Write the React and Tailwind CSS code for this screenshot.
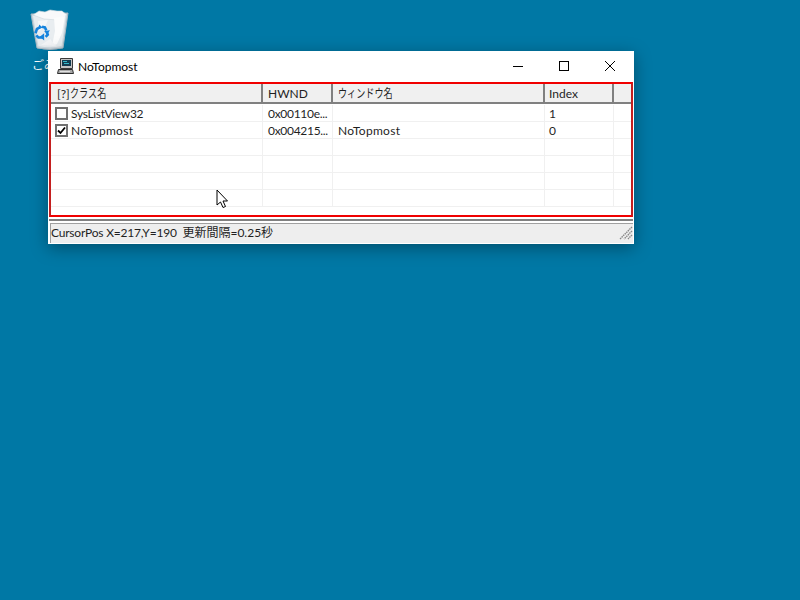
import { Fragment } from "react";

// Meiryo UI has narrow kana, so the Japanese labels get squeezed to their real width
const Kana = ({ children, width }) => (
  <span className={`${width} inline-block origin-left scale-x-[0.76] whitespace-nowrap text-[12px]`}>{children}</span>
);

const columns = [
  { label: <>[?]<Kana width="w-[37px]">クラス名</Kana></>, width: "w-[212px] border-r-2", pad: "pl-[6px]" },
  { label: "HWND", width: "w-[70px] border-r-2", pad: "pl-[5px]" },
  { label: <Kana width="w-[53px]">ウィンドウ名</Kana>, width: "w-[212px] border-r-2", pad: "pl-[5px]" },
  { label: "Index", width: "w-[69px] border-r-2", pad: "pl-[4px]" },
  { label: "", width: "flex-1", pad: "" },
];

const rows = [
  { name: "SysListView32", hwnd: "0x00110e...", title: "", index: "1", checked: false },
  { name: "NoTopmost", hwnd: "0x004215...", title: "NoTopmost", index: "0", checked: true },
  {},
  {},
  {},
  {},
];

// Recycle bin on the desktop
const RecycleBin = () => (
  <svg width="40" height="42" viewBox="0 0 40 42">
    <path d="M1 5 L38 4 L33 39 Q20 42 7 39 Z" fill="#cdd8df" stroke="#a8b8c2" strokeWidth="1" />
    <path d="M3 7 L36 6 L31.5 37 Q20 39.5 8.5 37 Z" fill="#e8edf0" />
    <path d="M3 6 L9 2 L15 3 L20 1 L27 2 L32 2 L37 6 L28 11 L14 10 Z" fill="#f8f9fa" stroke="#cfd8de" strokeWidth="0.6" />
    <path d="M24 9 L35 7 L32 24 L27 35 L22 37 L25 22 Z" fill="#fbfcfc" />
    <path d="M8 12 L18 11 L15 18 L9 22 Z" fill="#f5f7f8" />
    <path d="M11 36 L20 30 L26 37 Z" fill="#f3f5f7" />
    <g transform="translate(12 23.5) scale(0.72) translate(-17 -24)">
      <g fill="none" stroke="#1583dd" strokeWidth="3.6">
        <path d="M8 25 L10 19 L14 17" />
        <path d="M17 16 L21 17 L23 21" />
        <path d="M22 30 L25 27 L24 24" />
        <path d="M19 31 L12 31 L9 28" />
      </g>
      <path d="M13 13 L18 17 L12 20 Z M20 25 L20 35 L14 30 Z M20 22 L28 21 L24 27 Z" fill="#1583dd" />
    </g>
  </svg>
);

const TitleIcon = () => (
  <svg width="17" height="16" viewBox="0 0 17 16">
    <path d="M3.5 0.5 H15.5 V10.5 H3.5 Z" fill="#c4c4c4" stroke="#3a3a3a" />
    <rect x="5" y="2" width="9" height="6" fill="#123c50" />
    <path d="M6 3.5 H10 M7 5.5 H12" stroke="#35b8c8" />
    <path d="M1.5 11.5 H15.5 L16.5 15.5 H0.5 Z" fill="#a8a8a8" stroke="#2e2e2e" />
    <path d="M3 13.5 H13" stroke="#e0e0e0" />
  </svg>
);

const Checkbox = ({ checked }) => (
  <span className="flex h-[13px] w-[13px] items-center justify-center border-2 border-[#707070] bg-white">
    {checked && (
      <svg width="9" height="9" viewBox="0 0 9 9">
        <path d="M1 4.5 L3.5 7 L8 1.5" fill="none" stroke="#000" strokeWidth="1.8" />
      </svg>
    )}
  </span>
);

const Cursor = () => (
  <svg className="absolute left-[165px] top-[105px]" width="14" height="20" viewBox="0 0 14 20">
    <path d="M1 1 V16 L4.5 13 L7 18.5 L9.5 17.5 L7 12 H11.5 Z" fill="#fff" stroke="#000" strokeWidth="1" />
  </svg>
);

export default function App() {
  return (
    <div className="relative h-[600px] w-[800px] overflow-hidden bg-[#0078a5] font-['Lato','Noto_Sans_CJK_JP',sans-serif] text-[12px] text-[#1f1f1f]">
      {/* Desktop icon */}
      <div className="absolute left-[30px] top-[9px] flex w-[40px] flex-col items-center">
        <RecycleBin />
        <span className="mt-[8px] text-[12px] leading-[14px] text-white">ごみ箱</span>
      </div>

      {/* Window */}
      <div className="absolute left-[48px] top-[51px] flex h-[193px] w-[586px] flex-col bg-white shadow-[0_4px_16px_rgba(0,0,0,0.35)]">
        {/* Title bar */}
        <div className="flex h-[31px] shrink-0 items-center pb-[1px]">
          <span className="ml-[9px] mr-[4px] flex">
            <TitleIcon />
          </span>
          <span className="pt-[1px] text-[12px] text-black">NoTopmost</span>
          <div className="ml-auto mr-[1px] flex h-full">
            <button className="flex w-[46px] items-center justify-center">
              <svg width="10" height="10" viewBox="0 0 10 10">
                <path d="M0 5.5 H10" stroke="#000" />
              </svg>
            </button>
            <button className="flex w-[46px] items-center justify-center">
              <svg width="10" height="10" viewBox="0 0 10 10">
                <rect x="0.5" y="0.5" width="9" height="9" fill="none" stroke="#000" />
              </svg>
            </button>
            <button className="flex w-[46px] items-center justify-center">
              <svg width="10" height="10" viewBox="0 0 10 10">
                <path d="M0 0 L10 10 M10 0 L0 10" stroke="#000" />
              </svg>
            </button>
          </div>
        </div>

        {/* List view with red highlight */}
        <div className="relative mx-[1px] h-[135px] shrink-0 border-2 border-x-[#c41f1f] border-y-[#f00000] bg-white">
          <div className="flex h-[20px] border-b-2 border-[#808080] bg-[#f0f0f0]">
            {columns.map((col, i) => (
              <div
                key={i}
                className={`${col.width} ${col.pad} flex items-center border-[#808080] pt-[1px] leading-[16px]`}
              >
                {col.label}
              </div>
            ))}
          </div>
          <div className="grid grid-cols-[212px_70px_212px_69px_1fr] pt-[1px] tracking-[-0.3px]">
            {rows.map((row, i) => (
              <Fragment key={i}>
                <div className="flex h-[17px] items-center gap-[3px] border-b border-r border-[#f0f0f0] pl-[4px]">
                  {row.name && <Checkbox checked={row.checked} />}
                  <span className={row.checked ? "pt-[1px] tracking-[0.3px]" : "pt-[1px]"}>{row.name}</span>
                </div>
                <div className="flex h-[17px] items-center border-b border-r border-[#f0f0f0] pl-[5px] pt-[1px]">{row.hwnd}</div>
                <div className="flex h-[17px] items-center border-b border-r border-[#f0f0f0] pl-[5px] pt-[1px] tracking-[0.3px]">{row.title}</div>
                <div className="flex h-[17px] items-center border-b border-r border-[#f0f0f0] pl-[4px] pt-[1px]">{row.index}</div>
                <div className="h-[17px] border-b border-[#f0f0f0]" />
              </Fragment>
            ))}
          </div>
          <Cursor />
        </div>

        {/* Splitter and status bar */}
        <div className="ml-[1px] mr-[1px] mt-[2px] h-[2px] shrink-0 bg-[#808080]" />
        <div className="ml-[2px] mr-[1px] mt-[2px] flex h-[20px] shrink-0 items-center border-l border-t border-[#a0a0a0] bg-[#eeeeee] pb-[1px]">
          <span className="whitespace-pre tracking-[-0.2px]">
            CursorPos X=217,Y=190  <span className="text-[12px] tracking-normal">更新間隔=0.25秒</span>
          </span>
          <svg className="ml-auto" width="14" height="14" viewBox="0 0 14 14">
            <path d="M13 1 L1 13 M13 5 L5 13 M13 9 L9 13" stroke="#888" strokeWidth="1.4" strokeDasharray="1.5 0.7" />
          </svg>
        </div>
      </div>
    </div>
  );
}
